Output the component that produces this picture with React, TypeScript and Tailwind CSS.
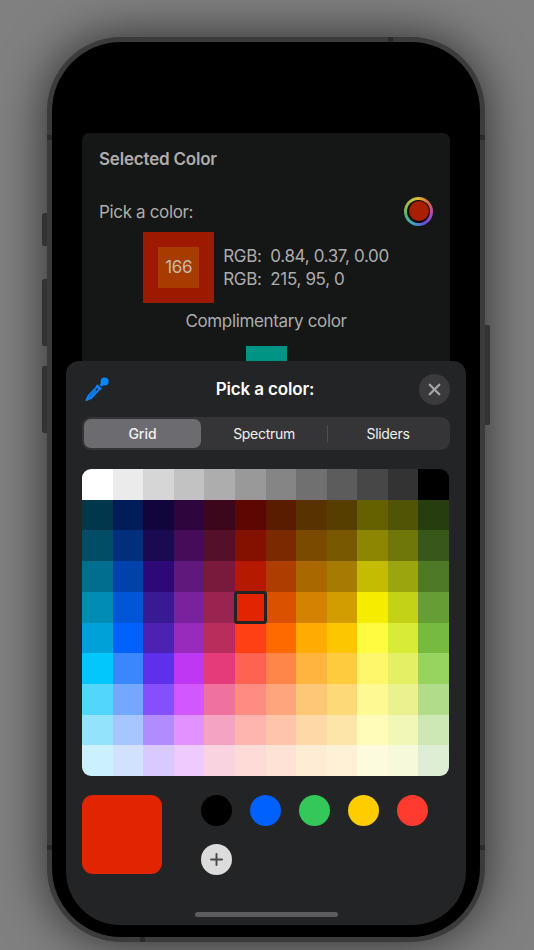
import React from 'react';
import { X, Plus } from 'lucide-react';

const grid = [
  ['#ffffff', '#ebebeb', '#d6d6d6', '#c2c2c2', '#adadad', '#999999', '#858585', '#707070', '#5c5c5c', '#474747', '#333333', '#000000'],
  ['#00374a', '#011d57', '#11053b', '#2e063d', '#3c071b', '#5c0701', '#5a1c00', '#583300', '#563d00', '#666100', '#4f5504', '#263e0f'],
  ['#004d65', '#012f7b', '#1a0a52', '#450d59', '#551029', '#831100', '#7b2900', '#7a4a00', '#785800', '#8d8602', '#6f760a', '#38571a'],
  ['#016e8f', '#0042a9', '#2c0977', '#61187c', '#791a3d', '#b51a00', '#ad3e00', '#a96800', '#a67b01', '#c4bc00', '#9ba50e', '#4e7a27'],
  ['#008cb4', '#0056d6', '#371a94', '#7a219e', '#99244f', '#e22400', '#da5100', '#d38301', '#d19d01', '#f5ec00', '#c3d117', '#669d34'],
  ['#00a1d8', '#0061fd', '#4d22b2', '#982abc', '#b92d5d', '#ff4015', '#ff6a00', '#ffab01', '#fcc700', '#fefb41', '#d8ec37', '#76bb40'],
  ['#01c7fc', '#3a87fd', '#5e30eb', '#be38f3', '#e63b7a', '#fe6250', '#fe8648', '#feb43f', '#fecb3e', '#fff76b', '#e4ef65', '#96d35f'],
  ['#52d6fc', '#74a7ff', '#864ffd', '#d357fe', '#ee719e', '#ff8c82', '#fea57d', '#fec777', '#fed977', '#fff994', '#eaf28f', '#b1dd8b'],
  ['#93e3fc', '#a7c6ff', '#b18cfe', '#e292fe', '#f4a4c0', '#ffb5af', '#ffc5ab', '#fed9a8', '#fde4a8', '#fffbb9', '#f1f7b7', '#cde8b5'],
  ['#cbf0ff', '#d2e2fe', '#d8c9fe', '#efcaff', '#f9d3e0', '#ffdbd8', '#ffe2d6', '#feecd4', '#fef1d5', '#fdfbdd', '#f6fadb', '#deeed4'],
];

const saved = ['#000000', '#0061fe', '#34c759', '#ffcc00', '#ff3b30'];

function Eyedropper() {
  return (
    <svg width="26" height="26" viewBox="0 0 26 26" fill="none" className="text-[#0a84ff]">
      <circle cx="20.6" cy="5.6" r="4" fill="currentColor" />
      <path d="M13.4 8.2 L18 12.8 L15.9 14.6 L11.5 10.2 Z" fill="currentColor" />
      <path d="M15.5 8.6 L19.5 4.6 L21.6 6.7 L17.6 10.7 Z" fill="currentColor" />
      <path d="M13 10.8 L4.6 19.6 L2.4 24.2 L7.2 22 L15.4 13.2" stroke="currentColor" strokeWidth="1.9" strokeLinejoin="round" />
      <path d="M4 23 L12 14.6" stroke="currentColor" strokeWidth="1.4" />
    </svg>
  );
}

export default function App() {
  return (
    <div className="w-[534px] h-[950px] bg-[#808080] overflow-hidden pl-[47px] pt-[37px] font-['Inter',sans-serif]">
      <div className="relative w-[438px] h-[905px] rounded-[74px] bg-[#3b3b3c] p-[5px] shadow-[0_0_50px_rgba(0,0,0,0.68)]">
        {/* side buttons */}
        <div className="absolute left-[-5px] top-[176px] w-[5px] h-[33px] rounded-l-[2px] bg-[#333334]" />
        <div className="absolute left-[-5px] top-[242px] w-[5px] h-[67px] rounded-l-[2px] bg-[#333334]" />
        <div className="absolute left-[-5px] top-[329px] w-[5px] h-[67px] rounded-l-[2px] bg-[#333334]" />
        <div className="absolute right-[-5px] top-[288px] w-[5px] h-[100px] rounded-r-[2px] bg-[#333334]" />

        {/* antenna bands */}
        <div className="absolute left-0 top-[98px] w-[5px] h-[5px] bg-[#2a2a2b]" />
        <div className="absolute right-0 top-[98px] w-[5px] h-[5px] bg-[#2a2a2b]" />
        <div className="absolute left-[341px] top-0 w-[5px] h-[5px] bg-[#2a2a2b]" />
        <div className="absolute left-0 bottom-[92px] w-[5px] h-[5px] bg-[#2a2a2b]" />
        <div className="absolute right-0 bottom-[92px] w-[5px] h-[5px] bg-[#2a2a2b]" />
        <div className="absolute left-[93px] bottom-0 w-[5px] h-[5px] bg-[#2a2a2b]" />

        <div className="w-full h-full rounded-[69px] bg-black px-[14px] py-[12px]">
          <div className="relative w-full h-full rounded-[54px] bg-black overflow-hidden pt-[79px]">
            {/* page behind the sheet */}
            <div className="mx-[16px] w-[368px] h-[400px] rounded-[7px] bg-[#151616] px-[17px] pt-[15px] text-[#adadad] text-[17px] tracking-[-0.35px]">
              <div className="h-[22px] leading-[22px] font-semibold tracking-[-0.2px]">Selected Color</div>
              <div className="mt-[26px] h-[30px] flex items-center justify-between">
                <span className="pt-[3px]">Pick a color:</span>
                <div className="w-[29px] h-[29px] rounded-full bg-[conic-gradient(#e0b93a,#d2603a,#b048c8,#6050d8,#40a8c8,#50b860,#a8c040,#e0b93a)] flex items-center justify-center">
                  <div className="w-[23px] h-[23px] rounded-full bg-[#0d0d0d] flex items-center justify-center">
                    <div className="w-[20px] h-[20px] rounded-full bg-[#a91f02]" />
                  </div>
                </div>
              </div>
              <div className="mt-[6px] flex justify-center gap-[9px]">
                <div className="w-[71px] h-[71px] bg-[#9d1a00] flex items-center justify-center">
                  <div className="w-[41px] h-[41px] bg-[#a63c00] flex items-center justify-center text-[#c8b8a8]">166</div>
                </div>
                <div className="flex flex-col justify-center leading-[23px] whitespace-pre">
                  <span>RGB:  0.84, 0.37, 0.00</span>
                  <span>RGB:  215, 95, 0</span>
                </div>
              </div>
              <div className="mt-[7px] h-[22px] leading-[22px] text-center">Complimentary color</div>
              <div className="mt-[14px] mx-auto w-[41px] h-[41px] bg-[#009484]" />
            </div>

            {/* bottom sheet */}
            <div className="absolute inset-x-0 top-[307px] bottom-0 rounded-t-[13px] bg-[#232425] px-[16px]">
              <div className="relative h-[56px] flex items-center justify-center">
                <div className="absolute left-[2px] top-[15px]">
                  <Eyedropper />
                </div>
                <span className="text-white text-[17px] font-semibold ml-[-2px] pt-[2px] tracking-[-0.15px]">Pick a color:</span>
                <div className="absolute right-0 top-[13px] w-[31px] h-[31px] rounded-full bg-[#3a3a3c] flex items-center justify-center">
                  <X size={19} strokeWidth={3} className="text-[#a5a5aa]" />
                </div>
              </div>

              <div className="h-[33px] rounded-[9px] bg-[#353537] p-[2px] flex items-stretch text-[14px] text-[#f0f0f0] tracking-[-0.3px]">
                <div className="w-[117px] rounded-[7px] bg-[#6c6c70] flex items-center justify-center font-medium tracking-normal">Grid</div>
                <div className="w-[126px] flex items-center justify-center">Spectrum</div>
                <div className="w-px my-[6px] bg-[#4d4d50]" />
                <div className="flex-1 flex items-center justify-center">Sliders</div>
              </div>

              <div className="relative mt-[19px] w-[367px] h-[307px] rounded-[9px] overflow-hidden grid grid-cols-12 grid-rows-10">
                {grid.flat().map((c, i) => (
                  <div key={i} style={{ backgroundColor: c }} />
                ))}
                {/* selected cell */}
                <div className="absolute left-[152px] top-[122px] w-[33px] h-[33px] rounded-[3px] border-[3px] border-[#232323] bg-[#e22400]" />
              </div>

              <div className="mt-[19px] flex">
                <div className="w-[80px] h-[79px] rounded-[11px] bg-[#e22400]" />
                <div className="ml-[39px] w-[240px] flex flex-wrap gap-[18px]">
                  {saved.map(c => (
                    <div key={c} style={{ backgroundColor: c }} className="w-[31px] h-[31px] rounded-full" />
                  ))}
                  <div className="w-[31px] h-[31px] rounded-full bg-[#dcdcdc] flex items-center justify-center">
                    <Plus size={19} strokeWidth={2.4} className="text-[#48484a]" />
                  </div>
                </div>
              </div>

              <div className="absolute left-[129px] bottom-[8px] w-[143px] h-[5px] rounded-full bg-[#5c5c5e]" />
            </div>
          </div>
        </div>
      </div>
    </div>
  );
}
